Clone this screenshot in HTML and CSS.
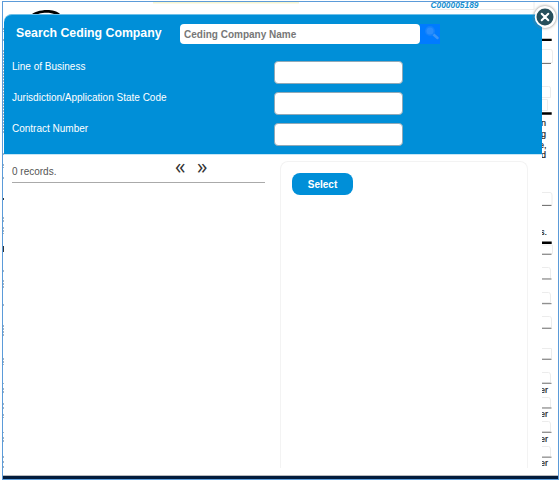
FILE: index.html
```html
<!DOCTYPE html>
<html lang="en">
<head>
<meta charset="utf-8">
<title>Search Ceding Company</title>
<link rel="stylesheet" href="styles.css">
</head>
<body>
<div class="window">
  <svg class="page-behind" width="560" height="480" viewBox="0 0 560 480">
    <rect x="153" y="1" width="146" height="2.5" fill="#f7f5d0"/>
    <path d="M30 16C36 9 54 8 60 14L60 17L55 14.500C50 11.500 38 12 33 17Z" fill="#000"/>
    <path d="M432 9.500H534V2" class="box"/>
    <text x="430.500" y="8" class="code" textLength="48" lengthAdjust="spacingAndGlyphs">C000005189</text>
    <g class="thick"><path d="M541 39.900H551.700M541 113.500H551.700M541 242.700H551.700"/></g>
    <g class="box">
      <path d="M540 49.500H550.500Q552.500 49.500 552.500 52V62.500H540"/>
      <path d="M540 86.500H548.500Q550.500 86.500 550.500 88V97.500H540"/>
      <path d="M540 99.500H547.500V110.500H540"/>
      <path d="M540 192.500H550Q552 192.500 552 195V204.500H540"/>
      <path d="M540 245H552.500V253.500H540"/>
      <path d="M540 267.500H548.500Q550.500 267.500 550.500 270V278.500H540"/>
      <path d="M540 292.500H548.500Q550.500 292.500 550.500 295V302.500H540"/>
      <path d="M540 316.500H549.500Q551.500 316.500 551.500 319V327.500H540"/>
      <path d="M540 348.500H551.500V358.500H540"/>
      <path d="M540 372.500H548.500Q550.500 372.500 550.500 375V382.500H540"/>
      <path d="M540 397.500H548.500Q550.500 397.500 550.500 400V407.500H540"/>
      <path d="M540 421.500H548.500Q550.500 421.500 550.500 424V431.500H540"/>
      <path d="M540 446.500H548.500Q550.500 446.500 550.500 449V456.500H540"/>
    </g>
    <path class="rule" d="M541 63.500H551M541 205.500H551.500M541 254.300H551.500M541 279H551.500M541 303.700H551.500M541 328.300H551.500M541 359.300H551.500M541 383.300H551.500M541 408H551.500M541 432.300H551.500M541 457.200H551.500"/>
    <g class="edge-text">
      <text x="541" y="126">n</text><text x="541" y="137">g</text><text x="539" y="148">e,</text><text x="541" y="158">d</text>
      <text x="540" y="235">s.</text>
      <text x="540" y="393">er</text><text x="540" y="417">er</text><text x="540" y="442">er</text><text x="540" y="466">er</text>
    </g>
    <path class="left-marks" d="M3.500 28V32M3.500 39V41M3.500 50V134M3.500 153V155M3.500 164V168M3.500 177V180M3.500 198V201M3.500 217V222M3.500 227V234M3.500 270V273M3.500 280V288M3.500 304V307M3.500 325V337M3.500 358V365M3.500 383V384M3.500 388V394M3.500 403V405M3.500 407V409M3.500 414V418M3.500 432V433M3.500 437V443M3.500 456V458M3.500 461V463M3.500 466V468"/>
    <path class="left-dark" d="M3.500 198V200M3.500 246V252"/>
  </svg>
  <div class="modal">
    <header class="search">
      <div class="search-bar">
        <h1>Search Ceding Company</h1>
        <input class="company" type="text" placeholder="Ceding Company Name">
        <button class="find" aria-label="Search">
          <svg width="20" height="20" viewBox="0 0 20 20"><path d="M13.500 10.500L17.500 14" stroke="#3b95f7" stroke-width="2.500" stroke-linecap="round"/><circle cx="10" cy="7" r="4.300" fill="#2a8dfc" stroke="#1482fb" stroke-width="1.500"/></svg>
        </button>
      </div>
      <div class="fields">
        <label class="field"><span>Line of Business</span><input type="text"></label>
        <label class="field"><span>Jurisdiction/Application State Code</span><input type="text"></label>
        <label class="field"><span>Contract Number</span><input type="text"></label>
      </div>
    </header>
    <main class="results">
      <section class="records">
        <span class="count">0 records.</span>
        <span class="arrow">«</span>
        <span class="arrow">»</span>
      </section>
      <section class="detail"><button class="select">Select</button></section>
    </main>
    <button class="close" aria-label="Close">
      <svg width="22" height="22" viewBox="0 0 22 22"><circle cx="11" cy="11" r="9.400" fill="#264f5c" stroke="#fff" stroke-width="1.800"/><path d="M7.700 7.700L14.300 14.300M14.300 7.700L7.700 14.300" stroke="#fff" stroke-width="2" stroke-linecap="round"/></svg>
    </button>
  </div>
  <div class="taskbar"></div>
  <div class="outline"></div>
</div>
</body>
</html>
```
FILE: styles.css
```css
* { box-sizing: border-box; }
body { margin: 0; background: #fff; font-family: "Liberation Sans", Arial, sans-serif; }
button, input { font-family: inherit; margin: 0; padding: 0; border: 0; }
.window { position: relative; width: 560px; height: 480px; overflow: hidden; padding: 14px 0 0 4px; }
.page-behind { position: absolute; inset: 0; }
.outline { position: absolute; top: 1px; left: 2px; width: 557px; height: 479px; border: 1px solid #5b9bd9; pointer-events: none; }
.taskbar { position: absolute; left: 3px; right: 2px; bottom: 1px; height: 4px; background: #031c3b; border-top: 1px solid #b9bbbe; }
.thick { stroke: #000; stroke-width: 2.4; }
.rule { stroke: #777; stroke-width: 1; }
.box { fill: none; stroke: #ececec; stroke-width: 1; }
.edge-text { font-size: 9px; fill: #222; stroke: #222; stroke-width: .2; }
.edge-text text { stroke: #222; }
.code { font-size: 8.5px; font-weight: bold; font-style: italic; fill: #168fd0; }
.left-marks { stroke: #a5b4c3; stroke-width: 1; stroke-dasharray: 2 1; }
.left-dark { stroke: #333; stroke-width: 1; }

.modal { position: relative; width: 538px; height: 454px; background: #fff; border-radius: 8px 0 0 0; }
.search { height: 140px; padding: 9px 0 0 8px; background: #008fd8; border-top: 1px solid #6fc0e8; border-radius: 8px 0 0 0; color: #fff; }
.search-bar { display: flex; height: 20px; }
h1 { width: 168px; margin: 0; padding-left: 4px; font-size: 12.3px; line-height: 18px; white-space: nowrap; }
.company { width: 240px; height: 20px; padding: 0 4px; border-radius: 4px; background: #fff; font-size: 10px; font-weight: bold; }
.company::placeholder { color: #777; opacity: 1; }
.find { width: 20px; height: 20px; background: #007bff; }
.find svg { display: block; }
.fields { display: grid; gap: 8px; padding-top: 17px; }
.field { display: flex; height: 23px; }
.field span { width: 262px; font-size: 10px; line-height: 11px; }
.field input { width: 129px; height: 23px; border: 1px solid #8fa9b8; border-radius: 4px; background: #fff; }

.results { display: flex; height: 314px; padding: 6px 0 0 8px; border-top: 1px solid #c5e6f6; }
.records { display: flex; width: 253px; height: 22px; border-bottom: 1px solid #aaa; color: #333; }
.count { width: 163px; font-size: 10px; line-height: 21px; color: #555; }
.arrow { width: 22px; font-family: "Open Sans", sans-serif; font-size: 21px; line-height: 11px; }
.detail { width: 248px; margin-left: 15px; padding: 11px; border: 1px solid #f3f3f3; border-width: 1px 1px 0; border-radius: 8px 8px 0 0; }
.select { display: block; width: 61px; height: 22px; border-radius: 8px; background: #008fd8; color: #fff; font-size: 10px; font-weight: bold; }
.close { position: absolute; top: -8px; right: -14px; width: 22px; height: 22px; border-radius: 50%; background: none; box-shadow: 0 0 3px #777; }
.close svg { display: block; }
```
